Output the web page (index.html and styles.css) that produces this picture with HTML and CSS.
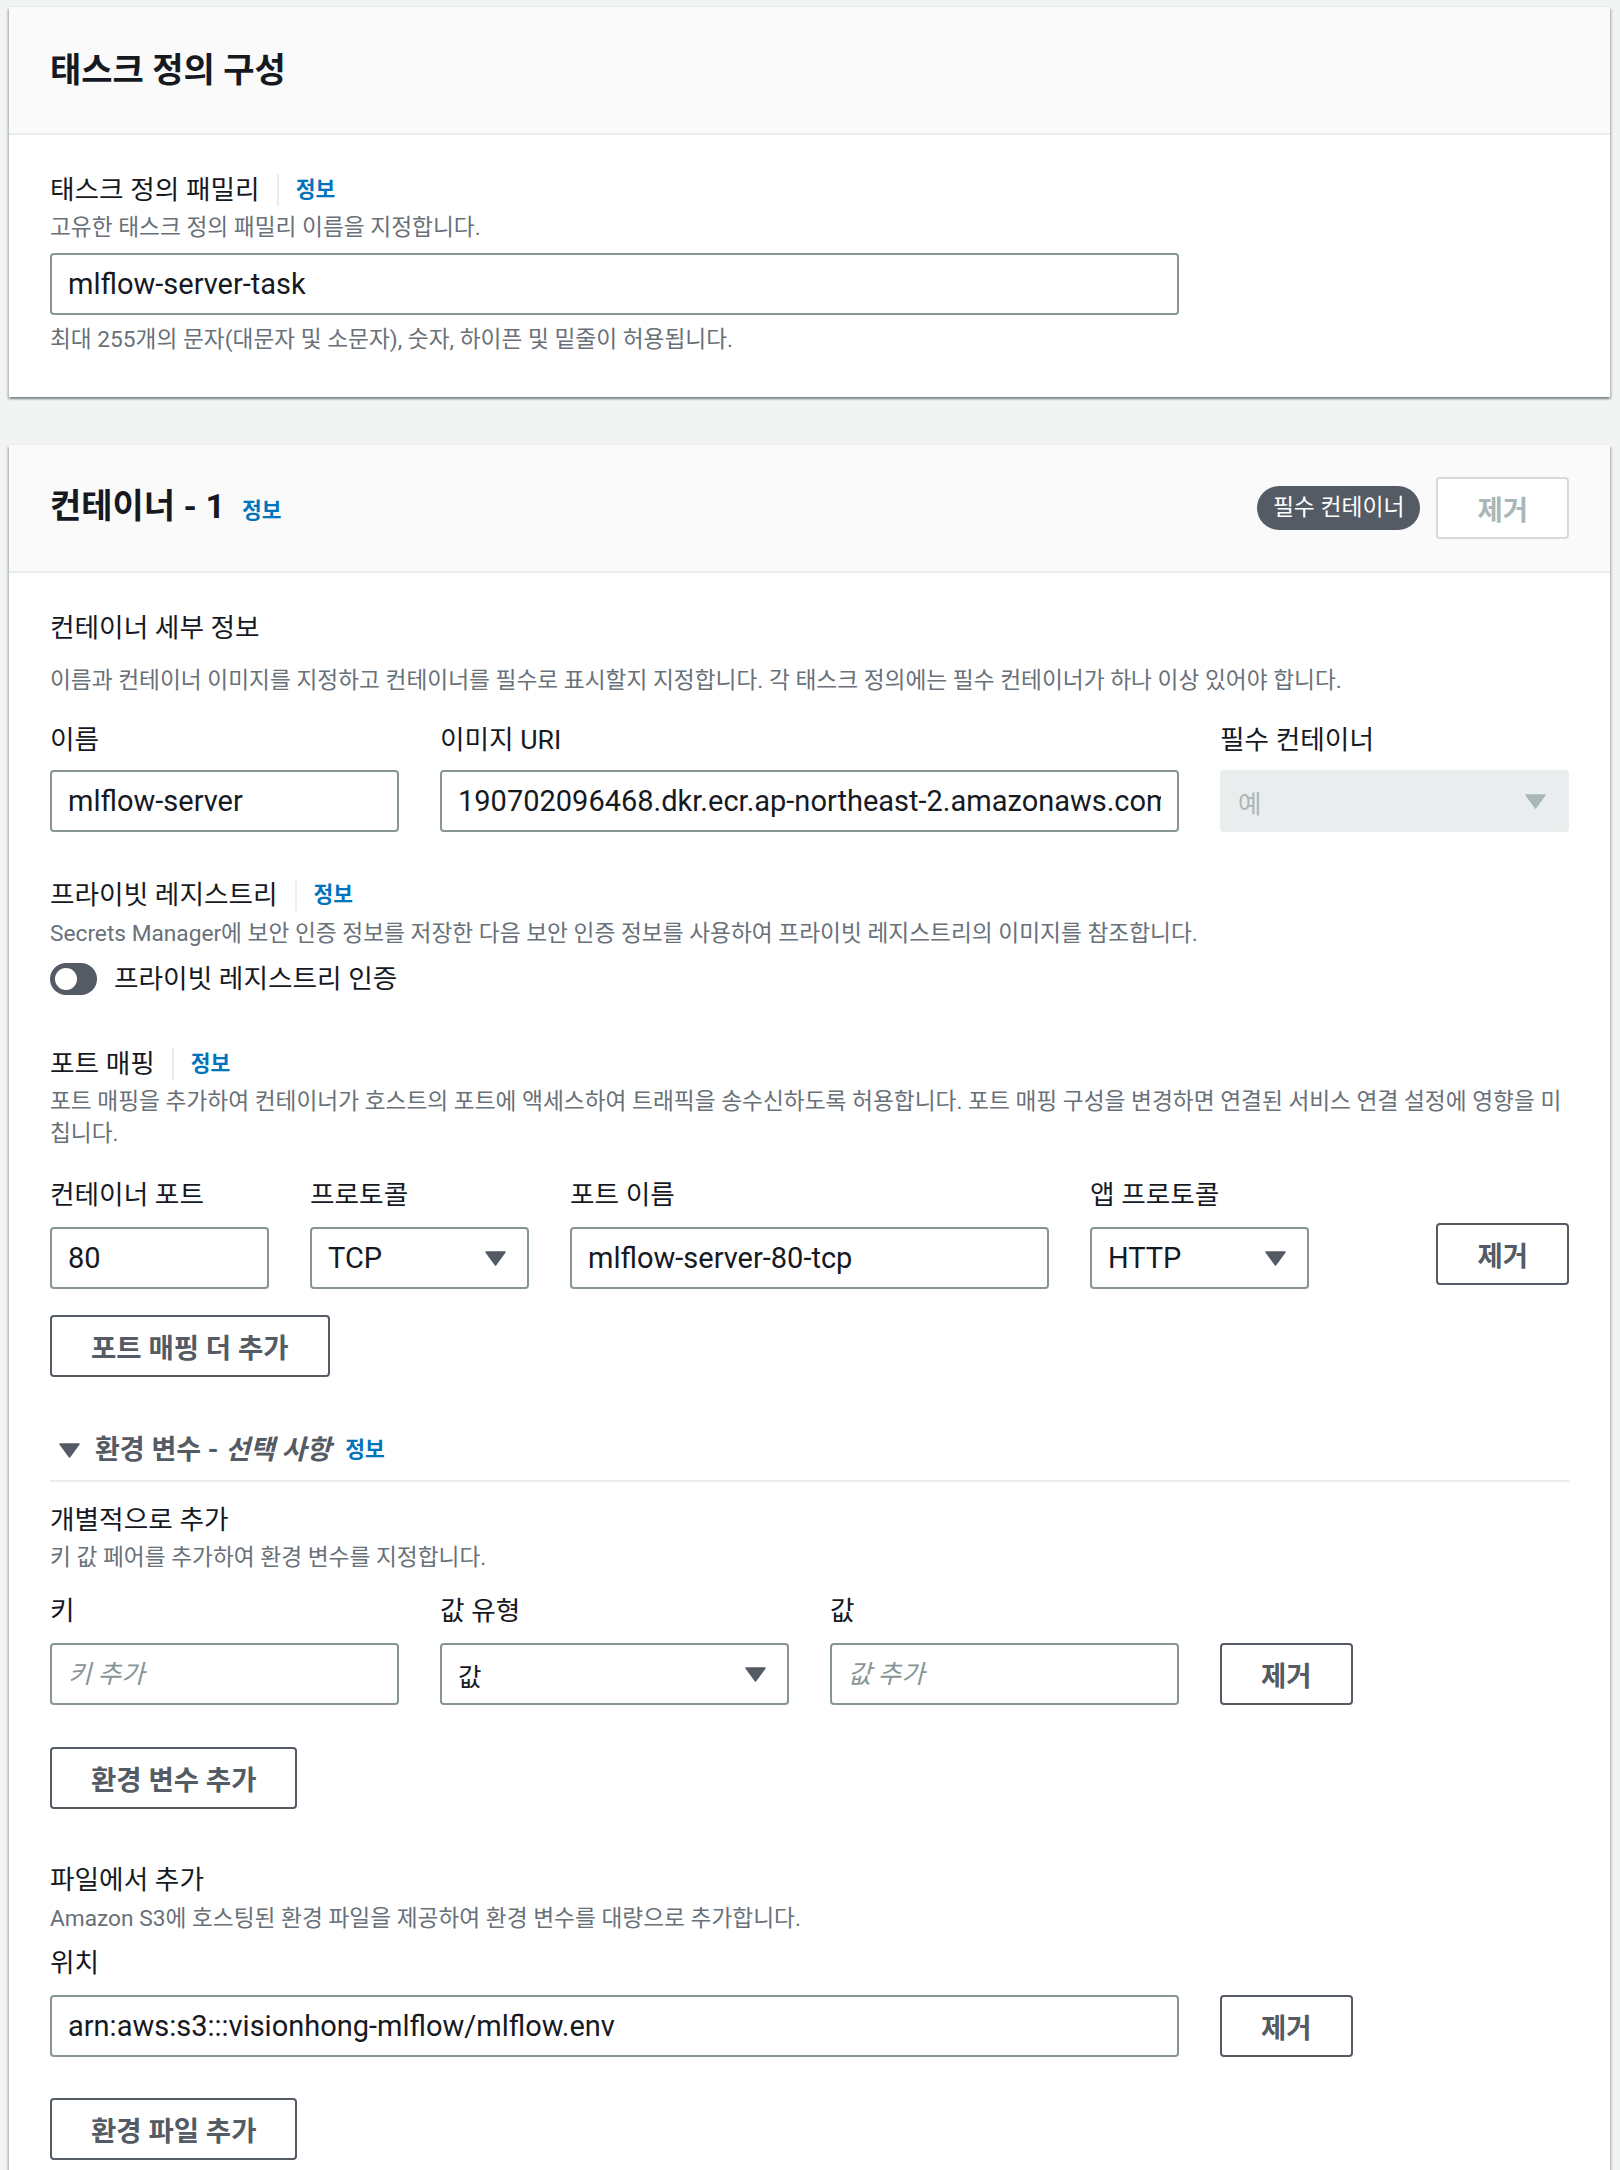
FILE: index.html
```html
<!DOCTYPE html>
<html lang="ko">
<head>
<meta charset="utf-8">
<title>태스크 정의 구성</title>
<link rel="stylesheet" href="styles.css">
</head>
<body>
<div class="page">
  <section class="card">
    <div class="card-header">
      <h2 class="card-title">태스크 정의 구성</h2>
    </div>
    <div class="card-body">
      <div class="label-row">
        <span class="label">태스크 정의 패밀리</span>
        <span class="sep"></span>
        <a class="info">정보</a>
      </div>
      <p class="desc">고유한 태스크 정의 패밀리 이름을 지정합니다.</p>
      <div class="grid4 control-row">
        <input class="input span3" type="text" value="mlflow-server-task">
      </div>
      <p class="desc constraint">최대 255개의 문자(대문자 및 소문자), 숫자, 하이픈 및 밑줄이 허용됩니다.</p>
    </div>
  </section>

  <section class="card card-last">
    <div class="card-header">
      <div class="header-left">
        <h2 class="card-title">컨테이너 - 1</h2>
        <a class="info">정보</a>
      </div>
      <div class="header-actions">
        <span class="badge">필수 컨테이너</span>
        <button class="btn btn-disabled" type="button">제거</button>
      </div>
    </div>
    <div class="card-body">
      <h3 class="sub-heading">컨테이너 세부 정보</h3>
      <p class="desc desc-after-heading">이름과 컨테이너 이미지를 지정하고 컨테이너를 필수로 표시할지 지정합니다. 각 태스크 정의에는 필수 컨테이너가 하나 이상 있어야 합니다.</p>

      <div class="grid4 details-row">
        <div class="cell">
          <span class="label field-label">이름</span>
          <input class="input" type="text" value="mlflow-server">
        </div>
        <div class="cell span2">
          <span class="label field-label">이미지 URI</span>
          <input class="input" type="text" value="190702096468.dkr.ecr.ap-northeast-2.amazonaws.com/mlflow-server:latest">
        </div>
        <div class="cell">
          <span class="label field-label">필수 컨테이너</span>
          <div class="select select-disabled">
            <span class="select-value ko">예</span>
            <svg class="caret" width="21" height="15" viewBox="0 0 21 15"><path d="M1 1h19L10.5 14z" fill="#aab7b8" stroke="#aab7b8" stroke-width="1.5" stroke-linejoin="round"/></svg>
          </div>
        </div>
      </div>

      <div class="label-row section-gap">
        <span class="label">프라이빗 레지스트리</span>
        <span class="sep"></span>
        <a class="info">정보</a>
      </div>
      <p class="desc desc-tight">Secrets Manager에 보안 인증 정보를 저장한 다음 보안 인증 정보를 사용하여 프라이빗 레지스트리의 이미지를 참조합니다.</p>
      <div class="toggle-row">
        <span class="toggle"><span class="knob"></span></span>
        <span class="label">프라이빗 레지스트리 인증</span>
      </div>

      <div class="label-row section-gap-ports">
        <span class="label">포트 매핑</span>
        <span class="sep"></span>
        <a class="info">정보</a>
      </div>
      <p class="desc">포트 매핑을 추가하여 컨테이너가 호스트의 포트에 액세스하여 트래픽을 송수신하도록 허용합니다. 포트 매핑 구성을 변경하면 연결된 서비스 연결 설정에 영향을 미칩니다.</p>

      <div class="grid6 ports-row">
        <div class="cell">
          <span class="label field-label field-label-wide">컨테이너 포트</span>
          <input class="input" type="text" value="80">
        </div>
        <div class="cell">
          <span class="label field-label field-label-wide">프로토콜</span>
          <div class="select">
            <span class="select-value">TCP</span>
            <svg class="caret" width="21" height="15" viewBox="0 0 21 15"><path d="M1 1h19L10.5 14z" fill="#545b64" stroke="#545b64" stroke-width="1.5" stroke-linejoin="round"/></svg>
          </div>
        </div>
        <div class="cell span2">
          <span class="label field-label field-label-wide">포트 이름</span>
          <input class="input" type="text" value="mlflow-server-80-tcp">
        </div>
        <div class="cell">
          <span class="label field-label field-label-wide">앱 프로토콜</span>
          <div class="select">
            <span class="select-value">HTTP</span>
            <svg class="caret" width="21" height="15" viewBox="0 0 21 15"><path d="M1 1h19L10.5 14z" fill="#545b64" stroke="#545b64" stroke-width="1.5" stroke-linejoin="round"/></svg>
          </div>
        </div>
        <div class="cell cell-action-right">
          <button class="btn" type="button">제거</button>
        </div>
      </div>
      <button class="btn add-port" type="button">포트 매핑 더 추가</button>

      <div class="expander">
        <svg class="expander-caret" width="21" height="15" viewBox="0 0 21 15"><path d="M1 1h19L10.5 14z" fill="#545b64" stroke="#545b64" stroke-width="1.5" stroke-linejoin="round"/></svg>
        <span class="expander-title">환경 변수 - <em>선택 사항</em></span>
        <a class="info">정보</a>
      </div>
      <div class="divider"></div>

      <div class="label-row sub-first">
        <span class="label">개별적으로 추가</span>
      </div>
      <p class="desc">키 값 페어를 추가하여 환경 변수를 지정합니다.</p>

      <div class="grid4 env-row">
        <div class="cell">
          <span class="label field-label field-label-wide">키</span>
          <input class="input ko" type="text" placeholder="키 추가">
        </div>
        <div class="cell">
          <span class="label field-label field-label-wide">값 유형</span>
          <div class="select">
            <span class="select-value ko">값</span>
            <svg class="caret" width="21" height="15" viewBox="0 0 21 15"><path d="M1 1h19L10.5 14z" fill="#545b64" stroke="#545b64" stroke-width="1.5" stroke-linejoin="round"/></svg>
          </div>
        </div>
        <div class="cell">
          <span class="label field-label field-label-wide">값</span>
          <input class="input ko" type="text" placeholder="값 추가">
        </div>
        <div class="cell cell-action-left">
          <button class="btn" type="button">제거</button>
        </div>
      </div>
      <button class="btn add-env" type="button">환경 변수 추가</button>

      <div class="label-row file-gap">
        <span class="label">파일에서 추가</span>
      </div>
      <p class="desc desc-tight">Amazon S3에 호스팅된 환경 파일을 제공하여 환경 변수를 대량으로 추가합니다.</p>
      <div class="label-row location-label">
        <span class="label">위치</span>
      </div>
      <div class="grid4 file-row">
        <input class="input span3" type="text" value="arn:aws:s3:::visionhong-mlflow/mlflow.env">
        <div class="cell cell-action-left">
          <button class="btn" type="button">제거</button>
        </div>
      </div>
      <button class="btn add-file" type="button">환경 파일 추가</button>
    </div>
  </section>
</div>
</body>
</html>
```

FILE: styles.css
```css
* {
  box-sizing: border-box;
}

html,
body {
  margin: 0;
  padding: 0;
}

body {
  background: #f2f3f3;
  font-family: Roboto, "Noto Sans CJK KR", sans-serif;
  color: #16191f;
}

.page {
  padding: 7px 10px 0 9px;
  display: flex;
  flex-direction: column;
  gap: 48px;
}

.card {
  background: #ffffff;
  box-shadow: 0 -1px 0 0 #eaeded, 0 2px 2px 0 rgba(0, 28, 36, 0.3), 2px 2px 2px 0 rgba(0, 28, 36, 0.15), -2px 2px 2px 0 rgba(0, 28, 36, 0.15);
}

.card-header {
  height: 128px;
  background: #fafafa;
  border-bottom: 2px solid #eaeded;
  padding: 0 41px;
  display: flex;
  align-items: center;
  justify-content: space-between;
}

.card-title {
  margin: 0;
  font-size: 34px;
  line-height: 40px;
  font-weight: 700;
  color: #16191f;
}

.header-left {
  display: flex;
  align-items: baseline;
  gap: 17px;
}

.header-actions {
  display: flex;
  align-items: center;
  gap: 16px;
}

.badge {
  height: 44px;
  padding: 0 16px;
  border-radius: 22px;
  background: #545b64;
  color: #ffffff;
  font-size: 22.8px;
  line-height: 44px;
  white-space: nowrap;
}

.card-body {
  padding: 35px 41px 41px;
}

.card-last .card-body {
  padding-bottom: 10px;
}

.label-row {
  display: flex;
  align-items: center;
  height: 40px;
}

.label {
  font-size: 26.7px;
  line-height: 40px;
  color: #16191f;
  white-space: nowrap;
}

.sep {
  width: 2px;
  height: 32px;
  background: #eaeded;
  margin: 0 17px;
}

.info {
  font-size: 21.5px;
  font-weight: 700;
  color: #0073bb;
  text-decoration: none;
  line-height: 40px;
  cursor: pointer;
}

.desc {
  margin: 2px 0 0;
  font-size: 22.7px;
  line-height: 32px;
  color: #687078;
}

.desc-tight {
  margin-top: 3px;
}

.constraint {
  margin-top: 9px;
}

.sub-heading {
  margin: 0;
  font-size: 26.7px;
  line-height: 40px;
  font-weight: 400;
  color: #16191f;
}

.desc-after-heading {
  margin-top: 17px;
}

.grid4 {
  display: grid;
  grid-template-columns: repeat(4, 1fr);
  column-gap: 41px;
}

.grid6 {
  display: grid;
  grid-template-columns: repeat(6, 1fr);
  column-gap: 41px;
}

.span2 {
  grid-column: span 2;
}

.span3 {
  grid-column: span 3;
}

.cell {
  display: flex;
  flex-direction: column;
  min-width: 0;
}

.field-label {
  margin-bottom: 10px;
}

.field-label-wide {
  margin-bottom: 12px;
}

.control-row {
  margin-top: 9px;
}

.details-row {
  margin-top: 23px;
}

.input {
  display: block;
  width: 100%;
  height: 62px;
  border: 2px solid #879596;
  border-radius: 4px;
  padding: 0 16px;
  font-family: Roboto, "Noto Sans CJK KR", sans-serif;
  font-size: 29px;
  color: #16191f;
  background: #ffffff;
  outline: none;
}

.input.ko {
  font-size: 25.5px;
}

.input::placeholder {
  font-style: italic;
  color: #879596;
}

.select {
  height: 62px;
  border: 2px solid #879596;
  border-radius: 4px;
  padding: 0 21px 0 16px;
  display: flex;
  align-items: center;
  justify-content: space-between;
  background: #ffffff;
}

.select-value {
  font-size: 29px;
  color: #16191f;
}

.select-value.ko {
  font-size: 25.5px;
}

.select-disabled {
  background: #eaeded;
  border-color: #eaeded;
}

.select-disabled .select-value {
  color: #aab7b8;
}

.caret {
  flex: none;
  display: block;
}

.section-gap {
  margin-top: 43px;
}

.toggle-row {
  margin-top: 9px;
  display: flex;
  align-items: center;
  gap: 17px;
  height: 40px;
}

.toggle {
  width: 47px;
  height: 32px;
  border-radius: 16px;
  background: #545b64;
  display: flex;
  align-items: center;
  padding-left: 5px;
}

.knob {
  width: 22px;
  height: 22px;
  border-radius: 50%;
  background: #ffffff;
}

.section-gap-ports {
  margin-top: 45px;
}

.ports-row {
  margin-top: 25px;
}

.cell-action-right {
  justify-content: flex-end;
  align-items: flex-end;
  padding-bottom: 4px;
}

.cell-action-left {
  justify-content: flex-end;
  align-items: flex-start;
}

.btn {
  height: 62px;
  border: 2px solid #545b64;
  border-radius: 4px;
  background: #ffffff;
  padding: 0 39px;
  font-family: Roboto, "Noto Sans CJK KR", sans-serif;
  font-size: 27.5px;
  font-weight: 700;
  color: #545b64;
  white-space: nowrap;
  cursor: pointer;
  display: block;
}

.btn-disabled {
  border-color: #d5dbdb;
  color: #aab7b8;
  cursor: default;
}

.add-port {
  margin-top: 26px;
}

.expander {
  margin-top: 53px;
  height: 40px;
  display: flex;
  align-items: center;
}

.expander-caret {
  margin-left: 9px;
  margin-right: 15px;
}

.expander-title {
  font-size: 27px;
  font-weight: 700;
  color: #545b64;
  line-height: 40px;
  margin-right: 14px;
  white-space: nowrap;
}

.expander-title em {
  font-style: italic;
}

.divider {
  margin-top: 10px;
  height: 2px;
  background: #eaeded;
}

.sub-first {
  margin-top: 18px;
}

.env-row {
  margin-top: 17px;
}

.add-env {
  margin-top: 42px;
}

.file-gap {
  margin-top: 51px;
}

.location-label {
  margin-top: 8px;
}

.file-row {
  margin-top: 12px;
}

.add-file {
  margin-top: 41px;
}
```
